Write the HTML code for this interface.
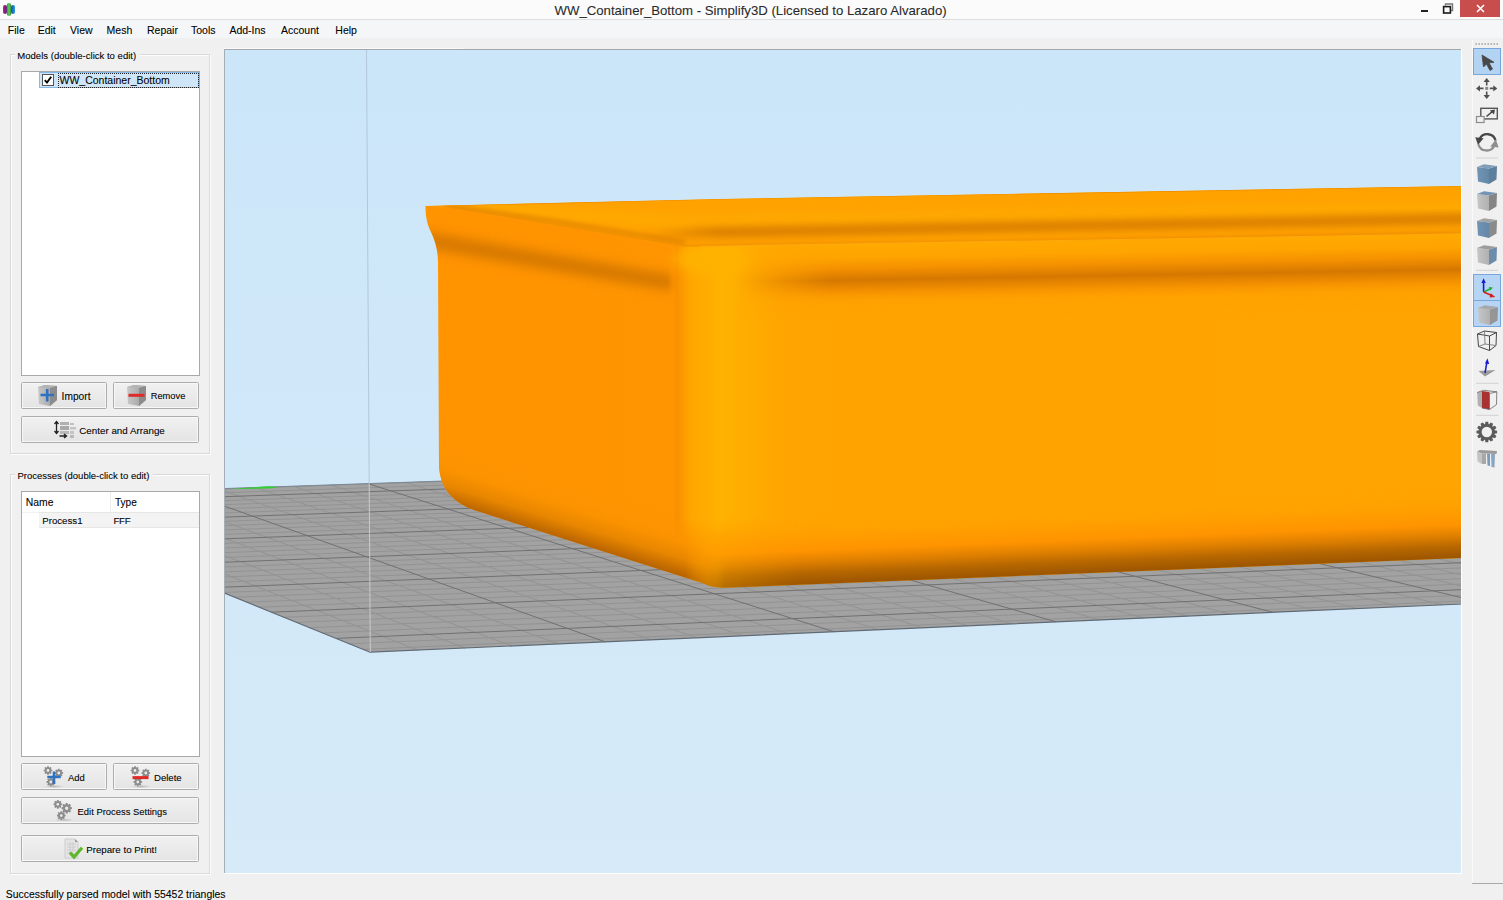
<!DOCTYPE html>
<html><head><meta charset="utf-8">
<style>
*{margin:0;padding:0;box-sizing:border-box}
html,body{width:1503px;height:900px;overflow:hidden;background:#f0f0f0;font-family:"Liberation Sans",sans-serif;color:#000}
.a{position:absolute}
#title{left:0;top:0;width:1503px;height:19px;background:#fbfbfb}
#title-line{left:0;top:19px;width:1503px;height:1px;background:#dddddd}
#menubar{left:0;top:20px;width:1503px;height:18px;background:#f5f6f8}
.menu{font-size:10.5px;top:24.8px;color:#1a1a1a}
.tx{line-height:1;white-space:nowrap;color:#000;-webkit-text-stroke:0.2px rgba(0,0,0,0.45)}
.t11{font-size:11px;color:#1e1e1e;white-space:nowrap}
.gb{border:1px solid #d9d9d9;box-shadow:inset 1px 1px 0 #fdfdfd, 1px 1px 0 #fdfdfd}
.lb{background:#fff;border:1px solid #a9a9a9}
.btn{border:1px solid #adadad;background:linear-gradient(#f2f2f2,#ebebeb 50%,#dddddd 51%,#cfcfcf);}
.btn{border-radius:1.5px;box-shadow:inset 0 0 0 1px #f7f7f7;background:linear-gradient(#f1f1f1,#e4e4e4)}
</style></head><body>
<div id="title" class="a"></div>
<div id="title-line" class="a"></div>
<!-- app icon -->
<svg class="a" style="left:0;top:0" width="20" height="19" viewBox="0 0 20 19">
 <defs>
  <linearGradient id="ip" x1="0" x2="1"><stop offset="0" stop-color="#c0207a"/><stop offset="1" stop-color="#5a1a90"/></linearGradient>
  <linearGradient id="ig" x1="0" x2="1"><stop offset="0" stop-color="#2a9a3a"/><stop offset="0.5" stop-color="#6acb5a"/><stop offset="1" stop-color="#2a8a3a"/></linearGradient>
  <linearGradient id="ib" x1="0" x2="1"><stop offset="0" stop-color="#1a4aa0"/><stop offset="1" stop-color="#2aa0e0"/></linearGradient>
 </defs>
 <rect x="3" y="5" width="4" height="9" rx="2" fill="url(#ip)"/>
 <rect x="11" y="5" width="4" height="9" rx="2" fill="url(#ib)"/>
 <rect x="6.8" y="3" width="4.4" height="13" rx="2.2" fill="url(#ig)"/>
</svg>
<div class="a tx" style="left:554.5px;top:3.8px;font-size:13.2px;color:#2e2e2e">WW_Container_Bottom - Simplify3D (Licensed to Lazaro Alvarado)</div>
<!-- window controls -->
<div class="a" style="left:1421px;top:10px;width:7px;height:2px;background:#222"></div>
<svg class="a" style="left:1442px;top:3px" width="12" height="11" viewBox="0 0 12 11"><path d="M3.5 2.5 V1 H10.5 V7.5 H9" fill="none" stroke="#777" stroke-width="1.4"/><rect x="1.6" y="3.6" width="6.8" height="6.4" fill="none" stroke="#1a1a1a" stroke-width="1.6"/></svg>
<div class="a" style="left:1460px;top:0;width:40px;height:17px;background:#c84d4d"></div>
<svg class="a" style="left:1476px;top:4px" width="9" height="9"><path d="M1 1L8 8M8 1L1 8" stroke="#fff" stroke-width="1.6"/></svg>

<div id="menubar" class="a"></div>
<div class="a tx menu" style="left:7.8px">File</div>
<div class="a tx menu" style="left:37.7px">Edit</div>
<div class="a tx menu" style="left:70px">View</div>
<div class="a tx menu" style="left:106.6px">Mesh</div>
<div class="a tx menu" style="left:147px">Repair</div>
<div class="a tx menu" style="left:191px">Tools</div>
<div class="a tx menu" style="left:229.4px">Add-Ins</div>
<div class="a tx menu" style="left:281px">Account</div>
<div class="a tx menu" style="left:335.3px">Help</div>

<!-- left panel: Models group -->
<div class="a gb" style="left:10px;top:54px;width:200px;height:400px"></div>
<div class="a" style="left:15px;top:50px;width:125px;height:8px;background:#f0f0f0"></div>
<div class="a tx" style="left:17.3px;top:51.3px;font-size:9.56px">Models (double-click to edit)</div>
<div class="a lb" style="left:21px;top:71px;width:179px;height:305px"></div>
<div class="a" style="left:39px;top:72px;width:160px;height:16px;background:#cfe6f8;border:1px solid #84b9ea"></div>
<div class="a" style="left:57.5px;top:72.5px;width:141px;height:15px;border:1px dotted #222"></div>
<div class="a" style="left:42px;top:74px;width:12px;height:12px;background:#fff;border:1px solid #555"></div>
<svg class="a" style="left:42px;top:74px" width="12" height="12"><path d="M2.8 6.2 L5 8.6 L9.2 2.8" stroke="#000" stroke-width="1.9" fill="none"/></svg>
<div class="a tx" style="left:59.5px;top:74.8px;font-size:10.5px">WW_Container_Bottom</div>

<!-- Import / Remove / Center -->
<div class="a btn" style="left:21px;top:382px;width:86px;height:27px"></div>
<div class="a btn" style="left:113px;top:382px;width:86px;height:27px"></div>
<div class="a btn" style="left:21px;top:416px;width:178px;height:27px"></div>
<svg class="a" style="left:37px;top:384px" width="22" height="23" viewBox="0 0 22 23">
 <defs><linearGradient id="cubeL" x1="0" x2="1"><stop offset="0" stop-color="#c8c8c8"/><stop offset="1" stop-color="#9a9a9a"/></linearGradient></defs>
 <path d="M1 3 L8 1 L20 2 L20 16 L13 22 L2 20 Z" fill="url(#cubeL)"/>
 <path d="M1 3 L8 1 L20 2 L13 4 Z" fill="#b4b4b4"/>
 <path d="M13 4 L20 2 L20 16 L13 22 Z" fill="#8c8c8c"/>
 <path d="M10.2 5 V17.5 M3.5 11 H17" stroke="#2f73c0" stroke-width="2.6"/>
</svg>
<div class="a tx" style="left:61.6px;top:391.9px;font-size:10.2px">Import</div>
<svg class="a" style="left:126px;top:384px" width="22" height="23" viewBox="0 0 22 23">
 <path d="M1 3 L8 1 L20 2 L20 16 L13 22 L2 20 Z" fill="url(#cubeL)"/>
 <path d="M1 3 L8 1 L20 2 L13 4 Z" fill="#b4b4b4"/>
 <path d="M13 4 L20 2 L20 16 L13 22 Z" fill="#8c8c8c"/>
 <path d="M2.5 11.3 H18.5" stroke="#e02a2a" stroke-width="3"/>
</svg>
<div class="a tx" style="left:150.7px;top:392.4px;font-size:9.3px">Remove</div>
<svg class="a" style="left:54px;top:420px" width="24" height="20" viewBox="0 0 24 20">
 <path d="M2.5 2 V13 M0.5 4 L2.5 1.5 L4.5 4 M0.5 11 L2.5 13.5 L4.5 11" stroke="#222" stroke-width="1.3" fill="none"/>
 <rect x="6" y="2" width="9" height="3" fill="#b0b0b0"/>
 <rect x="16" y="3" width="4" height="2" fill="#c0c0c0"/>
 <rect x="6" y="6" width="9" height="4" fill="#a8a8a8"/>
 <rect x="16" y="7" width="6" height="2.5" fill="#c4c4c4"/>
 <rect x="6" y="11" width="9" height="3" fill="#b8b8b8"/>
 <rect x="16" y="11" width="4" height="3" fill="#c4c4c4"/>
 <rect x="16" y="15" width="4" height="3" fill="#b8b8b8"/>
 <path d="M5.5 16 H12 M10 14 L12.5 16 L10 18" stroke="#222" stroke-width="1.4" fill="none"/>
</svg>
<div class="a tx" style="left:79.3px;top:426.2px;font-size:9.8px">Center and Arrange</div>

<!-- Processes group -->
<div class="a gb" style="left:10px;top:474px;width:200px;height:400px"></div>
<div class="a" style="left:15px;top:469px;width:138px;height:8px;background:#f0f0f0"></div>
<div class="a tx" style="left:17.4px;top:471px;font-size:9.5px">Processes (double-click to edit)</div>
<div class="a lb" style="left:21px;top:491px;width:179px;height:266px"></div>
<div class="a" style="left:110px;top:492px;width:1px;height:20px;background:#ededed"></div>
<div class="a" style="left:22px;top:512px;width:177px;height:1px;background:#f2f2f2"></div>
<div class="a tx" style="left:25.7px;top:498.2px;font-size:10.4px">Name</div>
<div class="a tx" style="left:114.9px;top:498.2px;font-size:10.15px">Type</div>
<div class="a" style="left:39px;top:512px;width:160px;height:16px;background:#f3f3f3;border-top:1px solid #e6e6e6;border-bottom:1px solid #e6e6e6"></div>
<div class="a tx" style="left:42.2px;top:516px;font-size:9.7px">Process1</div>
<div class="a tx" style="left:113.6px;top:516px;font-size:9.7px;letter-spacing:-0.4px">FFF</div>

<!-- Add / Delete / Edit / Prepare -->
<div class="a btn" style="left:21px;top:763px;width:86px;height:27px"></div>
<div class="a btn" style="left:113px;top:763px;width:86px;height:27px"></div>
<div class="a btn" style="left:21px;top:797px;width:178px;height:27px"></div>
<div class="a btn" style="left:21px;top:835px;width:178px;height:27px"></div>
<svg class="a" style="left:43px;top:765px" width="22" height="24" viewBox="0 0 22 24">
 <defs>
  <g id="gear"><path d="M3.02 -1.05 L4.33 -0.77 L4.33 0.77 L3.02 1.05 L2.88 1.40 L3.61 2.52 L2.52 3.61 L1.40 2.88 L1.05 3.02 L0.77 4.33 L-0.77 4.33 L-1.05 3.02 L-1.40 2.88 L-2.52 3.61 L-3.61 2.52 L-2.88 1.40 L-3.02 1.05 L-4.33 0.77 L-4.33 -0.77 L-3.02 -1.05 L-2.88 -1.40 L-3.61 -2.52 L-2.52 -3.61 L-1.40 -2.88 L-1.05 -3.02 L-0.77 -4.33 L0.77 -4.33 L1.05 -3.02 L1.40 -2.88 L2.52 -3.61 L3.61 -2.52 L2.88 -1.40 Z M1.40 0 A1.40 1.40 0 1 0 -1.40 0 A1.40 1.40 0 1 0 1.40 0 Z" fill="#8c8c8c" fill-rule="evenodd"/></g>
  <radialGradient id="shd"><stop offset="0" stop-color="#999" stop-opacity="0.6"/><stop offset="1" stop-color="#999" stop-opacity="0"/></radialGradient>
 </defs>
 <ellipse cx="11" cy="21.5" rx="10" ry="1.6" fill="url(#shd)"/>
 <use href="#gear" x="5" y="5.5"/>
 <use href="#gear" x="15.8" y="8"/>
 <use href="#gear" x="7.8" y="17"/>
 <path d="M11 6.5 V19 M4.3 12 H17.8" stroke="#2f73c0" stroke-width="2.6"/>
</svg>
<div class="a tx" style="left:68px;top:772.8px;font-size:9.44px">Add</div>
<svg class="a" style="left:130px;top:765px" width="22" height="24" viewBox="0 0 22 24">
 <ellipse cx="11" cy="21.5" rx="10" ry="1.6" fill="url(#shd)"/>
 <use href="#gear" x="5" y="5.5"/>
 <use href="#gear" x="15.8" y="8"/>
 <use href="#gear" x="7.8" y="17"/>
 <path d="M2.5 12.6 H18.5" stroke="#e02a2a" stroke-width="3"/>
</svg>
<div class="a tx" style="left:154px;top:772.8px;font-size:9.58px">Delete</div>
<svg class="a" style="left:52px;top:799px" width="24" height="24" viewBox="0 0 24 24">
 <ellipse cx="12" cy="21" rx="10" ry="1.6" fill="url(#shd)"/>
 <use href="#gear" x="5.8" y="5.3"/>
 <use href="#gear" x="14.7" y="9.2" transform="translate(14.7,9.2) scale(1.2) translate(-14.7,-9.2)"/>
 <use href="#gear" x="9.3" y="16.6"/>
</svg>
<div class="a tx" style="left:77.6px;top:806.8px;font-size:9.42px">Edit Process Settings</div>
<svg class="a" style="left:63px;top:838px" width="22" height="22" viewBox="0 0 22 22">
 <path d="M2 1 H12 L15 4 V20 H2 Z" fill="#e4e4e4" stroke="#c8c8c8" stroke-width="0.8"/>
 <path d="M12 1 L15 4 H12 Z" fill="#999"/>
 <path d="M4 6H13M4 9H13M4 12H13M4 15H10M7 4V18M10 4V18" stroke="#c9c9c9" stroke-width="0.8"/>
 <path d="M7 14.5 L11 19 L19 9.8" stroke="#5cb82a" stroke-width="3.2" fill="none"/>
</svg>
<div class="a tx" style="left:86.2px;top:845px;font-size:9.72px">Prepare to Print!</div>

<!-- status bar -->
<div class="a tx" style="left:5.7px;top:890.2px;font-size:10.44px">Successfully parsed model with 55452 triangles</div>

<!-- viewport -->
<div class="a" style="left:223px;top:48px;width:240px;height:1px;background:#fafafa"></div>
<div class="a" id="vp" style="left:224px;top:49px;width:1238px;height:825px;overflow:hidden;background:linear-gradient(#cbe6f9,#d6eaf8)">
<svg class="a" style="left:-224px;top:-49px" width="1503" height="900" viewBox="0 0 1503 900">
<defs>
 <filter id="b2" x="-50%" y="-50%" width="200%" height="200%"><feGaussianBlur stdDeviation="2"/></filter>
 <filter id="b4" x="-50%" y="-50%" width="200%" height="200%"><feGaussianBlur stdDeviation="4"/></filter>
 <filter id="b8" x="-50%" y="-50%" width="200%" height="200%"><feGaussianBlur stdDeviation="8"/></filter>
 <clipPath id="cc"><path id="outline" d="M426 206 L720 199 L1461 186 L1470 185.8 L1470 557.6 L1461 558 L725 587.7 C715 588 710 586.5 703 583.3 L474 510 C452 502 440 488 439 465 L438 262 C438 250 435 240 431 232 C427 224 425.5 216 425.5 206 Z"/></clipPath>
 <filter id="b1" x="-50%" y="-50%" width="200%" height="200%"><feGaussianBlur stdDeviation="1"/></filter>
 <filter id="b6" x="-50%" y="-50%" width="200%" height="200%"><feGaussianBlur stdDeviation="6"/></filter>
 <linearGradient id="gRT" gradientUnits="userSpaceOnUse" x1="0" y1="46.6" x2="0" y2="136.6">
  <stop offset="0" stop-color="#ffaa00" stop-opacity="1"/>
  <stop offset="0.15" stop-color="#ffa400" stop-opacity="1"/>
  <stop offset="0.27" stop-color="#f59200" stop-opacity="1"/>
  <stop offset="0.405" stop-color="#d67800" stop-opacity="1"/>
  <stop offset="0.54" stop-color="#f59200" stop-opacity="1"/>
  <stop offset="0.65" stop-color="#ffa000" stop-opacity="0.6"/>
  <stop offset="0.85" stop-color="#ffa300" stop-opacity="0"/>
 </linearGradient>
 <linearGradient id="gRB" gradientUnits="userSpaceOnUse" x1="0" y1="-70" x2="0" y2="5">
  <stop offset="0" stop-color="#ffa400" stop-opacity="0"/>
  <stop offset="0.25" stop-color="#ffa000" stop-opacity="1"/>
  <stop offset="0.48" stop-color="#ff9400"/>
  <stop offset="0.63" stop-color="#e08000"/>
  <stop offset="0.77" stop-color="#b86800"/>
  <stop offset="0.9" stop-color="#a05800"/>
  <stop offset="1" stop-color="#985400"/>
 </linearGradient>
 <linearGradient id="gLB" gradientUnits="userSpaceOnUse" x1="0" y1="-60" x2="0" y2="10">
  <stop offset="0" stop-color="#ff9400" stop-opacity="0"/>
  <stop offset="0.4" stop-color="#fa9200" stop-opacity="1"/>
  <stop offset="0.62" stop-color="#e88600"/>
  <stop offset="0.76" stop-color="#cc7200"/>
  <stop offset="0.86" stop-color="#b86400"/>
  <stop offset="1" stop-color="#b06000"/>
 </linearGradient>
 <linearGradient id="mgR" gradientUnits="userSpaceOnUse" x1="685" y1="0" x2="725" y2="0">
  <stop offset="0" stop-color="#000"/><stop offset="1" stop-color="#fff"/>
 </linearGradient>
 <linearGradient id="mgL" gradientUnits="userSpaceOnUse" x1="685" y1="0" x2="725" y2="0">
  <stop offset="0" stop-color="#fff"/><stop offset="1" stop-color="#000"/>
 </linearGradient>
 <mask id="mR" maskUnits="userSpaceOnUse" x="0" y="0" width="1503" height="900"><rect x="0" y="0" width="1503" height="900" fill="url(#mgR)"/></mask>
 <mask id="mL" maskUnits="userSpaceOnUse" x="0" y="0" width="1503" height="900"><rect x="0" y="0" width="1503" height="900" fill="url(#mgL)"/></mask>
 <clipPath id="ci"><path d="M426 206 L720 199 L1461 186 L1500 185 L1500 233.5 L685 246.8 L445 207 Z"/></clipPath>
 <linearGradient id="mgL2" gradientUnits="userSpaceOnUse" x1="668" y1="0" x2="678" y2="0">
  <stop offset="0" stop-color="#fff"/><stop offset="1" stop-color="#000"/>
 </linearGradient>
 <mask id="mL2" maskUnits="userSpaceOnUse" x="0" y="0" width="1503" height="900"><rect x="0" y="0" width="1503" height="900" fill="url(#mgL2)"/></mask>
 <linearGradient id="mgRB" gradientUnits="userSpaceOnUse" x1="690" y1="0" x2="800" y2="0">
  <stop offset="0" stop-color="#a0a0a0"/><stop offset="1" stop-color="#fff"/>
 </linearGradient>
 <mask id="mRB" maskUnits="userSpaceOnUse" x="0" y="-1000" width="1503" height="2000"><rect x="0" y="-1000" width="1503" height="2000" fill="url(#mgRB)"/></mask>
 <linearGradient id="mgRT" gradientUnits="userSpaceOnUse" x1="735" y1="0" x2="830" y2="0">
  <stop offset="0" stop-color="#000"/><stop offset="1" stop-color="#fff"/>
 </linearGradient>
 <mask id="mRT" maskUnits="userSpaceOnUse" x="0" y="0" width="1503" height="900"><rect x="0" y="0" width="1503" height="900" fill="url(#mgRT)"/></mask>
 <linearGradient id="mgB1" gradientUnits="userSpaceOnUse" x1="640" y1="0" x2="720" y2="0">
  <stop offset="0" stop-color="#000"/><stop offset="1" stop-color="#fff"/>
 </linearGradient>
 <mask id="mB1" maskUnits="userSpaceOnUse" x="0" y="0" width="1503" height="900"><rect x="0" y="0" width="1503" height="900" fill="url(#mgB1)"/></mask>
 <linearGradient id="gx" gradientUnits="userSpaceOnUse" x1="426" y1="0" x2="1461" y2="0">
  <stop offset="0.0000" stop-color="#ff9300"/>
  <stop offset="0.2386" stop-color="#ff9500"/>
  <stop offset="0.2425" stop-color="#f99000"/>
  <stop offset="0.2551" stop-color="#ffa600"/>
  <stop offset="0.2841" stop-color="#ffb200"/>
  <stop offset="0.3082" stop-color="#ffad00"/>
  <stop offset="0.3469" stop-color="#ffa500"/>
  <stop offset="0.4097" stop-color="#ffa300"/>
  <stop offset="1.0000" stop-color="#ffa400"/>
 </linearGradient>
</defs>
<polygon points="370.0,652.2 1889.6,585.1 1251.3,453.3 -13.1,496.7" fill="#a2a2a2"/>
<path d="M363.0 649.4L1878.1 582.7 M349.3 643.8L1855.8 578.1 M322.6 633.0L1811.9 569.0 M309.5 627.7L1790.4 564.6 M296.6 622.4L1769.1 560.2 M283.9 617.3L1748.2 555.9 M259.0 607.2L1707.0 547.4 M246.8 602.2L1686.8 543.2 M234.8 597.3L1666.9 539.1 M222.9 592.5L1647.2 535.0 M199.6 583.0L1608.5 527.0 M188.2 578.4L1589.5 523.1 M176.9 573.8L1570.8 519.2 M165.8 569.3L1552.2 515.4 M144.0 560.5L1515.8 507.9 M133.3 556.1L1497.9 504.2 M122.7 551.8L1480.3 500.6 M112.3 547.6L1462.8 497.0 M91.8 539.3L1428.4 489.9 M81.8 535.2L1411.6 486.4 M71.8 531.2L1394.9 482.9 M62.0 527.2L1378.4 479.5 M42.8 519.4L1345.9 472.8 M33.3 515.5L1329.9 469.5 M24.0 511.7L1314.2 466.3 M14.8 508.0L1298.6 463.0 M-3.4 500.6L1267.8 456.7 M-12.3 497.0L1252.7 453.6 M417.5 650.1L25.7 495.3 M464.8 648.0L64.4 494.0 M511.8 646.0L103.0 492.7 M558.5 643.9L141.3 491.4 M651.2 639.8L217.5 488.8 M697.2 637.8L255.3 487.5 M743.0 635.7L293.0 486.2 M788.4 633.7L330.5 484.9 M878.6 629.7L405.1 482.3 M923.4 627.8L442.1 481.1 M967.9 625.8L479.0 479.8 M1012.1 623.8L515.7 478.5 M1100.0 620.0L588.6 476.0 M1143.5 618.0L624.8 474.8 M1186.8 616.1L660.9 473.5 M1229.9 614.2L696.8 472.3 M1315.4 610.4L768.2 469.9 M1357.8 608.6L803.7 468.6 M1400.0 606.7L839.0 467.4 M1442.0 604.8L874.2 466.2 M1525.3 601.2L944.0 463.8 M1566.6 599.3L978.8 462.6 M1607.7 597.5L1013.3 461.5 M1648.6 595.7L1047.8 460.3 M1729.7 592.1L1116.2 457.9 M1770.0 590.4L1150.2 456.8 M1810.1 588.6L1184.0 455.6 M1849.9 586.8L1217.8 454.4" stroke="#939393" stroke-width="1" fill="none"/>
<path d="M335.9 638.4L1833.7 573.5 M271.4 612.2L1727.5 551.6 M211.2 587.7L1627.7 531.0 M154.8 564.9L1533.9 511.6 M102.0 543.4L1445.5 493.4 M52.4 523.3L1362.0 476.2 M5.6 504.3L1283.1 459.9 M605.0 641.8L179.5 490.1 M833.7 631.7L367.9 483.6 M1056.2 621.9L552.2 477.3 M1272.8 612.3L732.6 471.1 M1483.7 603.0L909.2 465.0 M1689.3 593.9L1082.0 459.1" stroke="#717171" stroke-width="1" fill="none"/>
<path d="M-13.1 496.7L370.0 652.2L1889.6 585.1L1251.3 453.3" stroke="#606a74" stroke-width="1.2" fill="none"/>
<path d="M-13.1 496.7L1251.3 453.3" stroke="#7c8894" stroke-width="1" fill="none"/>

<line x1="366.5" y1="49" x2="369.2" y2="483" stroke="#b3c7d7" stroke-width="1"/>
<line x1="369.2" y1="483" x2="370.3" y2="652" stroke="#c8cacc" stroke-width="1"/>
<path d="M229 489 L268 486.3 L279 487.2 L268 488.5 Z" fill="#2fd12f"/>
<g clip-path="url(#cc)">
 <rect x="400" y="150" width="1100" height="460" fill="url(#gx)"/>
 <!-- right face below rim (skewed gradient) -->
 <g mask="url(#mRT)">
 <g transform="matrix(1,-0.0175,0,1,0,211.9)">
  <rect x="600" y="46.6" width="900" height="90" fill="url(#gRT)"/>
 </g>
 </g>
 <!-- corner lip highlight -->
 <ellipse cx="712" cy="259" rx="38" ry="15" fill="#ffb200" filter="url(#b6)" opacity="0.9"/>
 <!-- left face features -->
 <g mask="url(#mL2)">
  <path d="M420 239 L572 266 L674 283" stroke="#c87000" stroke-width="15" fill="none" filter="url(#b6)" opacity="0.8"/>
 </g>
 <!-- bottom shading -->
 <g mask="url(#mR)">
 <g transform="matrix(1,-0.040,0,1,0,616.7)">
  <rect x="600" y="-70" width="900" height="75" fill="url(#gRB)" mask="url(#mRB)"/>
 </g>
 </g>
 <g mask="url(#mL)">
  <g transform="matrix(1,0.31,0,1,0,363.8)">
   <rect x="380" y="-60" width="360" height="70" fill="url(#gLB)"/>
  </g>
 </g>
 <!-- inner wall above rim line -->
 <g clip-path="url(#ci)">
  <rect x="400" y="150" width="1100" height="120" fill="#ffa200"/>
  <path d="M400 197 L560 214 L680 222 L1500 207" stroke="#ffaa00" stroke-width="10" fill="none" filter="url(#b4)"/>
  <path d="M445 205.5 L560 222 L685 242.5" stroke="#d87c00" stroke-width="4" fill="none" filter="url(#b2)" opacity="0.7"/>
  <path d="M640 236 L700 232.5 L760 231.5 L1500 218" stroke="#d07400" stroke-width="8" fill="none" filter="url(#b4)" mask="url(#mB1)"/>
  <path d="M445 208.5 L685 248.5 L1500 234" stroke="#ec8800" stroke-width="5" fill="none" filter="url(#b2)"/>
  <path d="M426 206 L720 199 L1461 186" stroke="#ee8c00" stroke-width="1.2" fill="none"/>
 </g>
 <path d="M700 246.5 L1500 233.2" stroke="#ffae10" stroke-width="1.2" fill="none" opacity="0.8"/>
</g>
</svg>
</div>
<div class="a" style="left:224px;top:49px;width:1238px;height:1px;background:#a3a6aa"></div>
<div class="a" style="left:224px;top:49px;width:1px;height:824px;background:#a5adb5"></div>
<div class="a" style="left:1461px;top:49px;width:1px;height:825px;background:#ffffff"></div>
<div class="a" style="left:224px;top:873px;width:1238px;height:1px;background:#ffffff"></div>

<!-- right toolbar -->
<div class="a" style="left:1472px;top:40px;width:31px;height:844px;background:#f0f0f0;border-left:1px solid #fafafa"></div>
<div class="a" style="left:1472px;top:883px;width:31px;height:1px;background:#a8a8a8"></div>
<svg class="a" style="left:1472px;top:38px" width="31" height="440" viewBox="1472 38 31 440">
 <defs>
  <linearGradient id="cbF" x1="0" x2="1"><stop offset="0" stop-color="#c6c6c6"/><stop offset="1" stop-color="#b0b0b0"/></linearGradient>
  <linearGradient id="cbB" x1="0" x2="1"><stop offset="0" stop-color="#7294b4"/><stop offset="1" stop-color="#6487a8"/></linearGradient>
 </defs>
 <path d="M1475.5 44 H1499" stroke="#9a9a9a" stroke-width="1.4" stroke-dasharray="1.4 1.6"/>
 <rect x="1473.5" y="48.5" width="27" height="26" fill="#b3d3f3" stroke="#76a6dc"/>
 <path d="M1482 55 L1483.5 67 L1486.5 64 L1490 70.5 L1492.5 69 L1489 62.8 L1494 62.3 Z" fill="#484848" stroke="#484848" stroke-width="0.8" stroke-linejoin="round"/>
 <!-- move -->
 <g fill="#505050" stroke="none">
  <path d="M1486.7 78 L1483.5 82 L1489.9 82 Z"/><path d="M1486.7 99 L1483.5 95 L1489.9 95 Z"/>
  <path d="M1476 88.4 L1480 85.2 L1480 91.6 Z"/><path d="M1497.3 88.4 L1493.3 85.2 L1493.3 91.6 Z"/>
 </g>
 <path d="M1486.7 81 V85.5 M1486.7 91.5 V96 M1479 88.4 H1483.5 M1489.8 88.4 H1494.5" stroke="#505050" stroke-width="1.6"/>
 <rect x="1485.2" y="86.9" width="3" height="3" fill="#8a8a8a"/>
 <!-- scale -->
 <rect x="1480.8" y="108.3" width="16.5" height="10.6" fill="none" stroke="#555" stroke-width="1.4"/>
 <rect x="1476.5" y="116.5" width="7.6" height="6" fill="#f0f0f0" stroke="#8c8c8c" stroke-width="1.2"/>
 <path d="M1486.5 116.5 L1493 111" stroke="#444" stroke-width="1.6"/>
 <path d="M1495 109.5 L1489.8 110.4 L1494 114.6 Z" fill="#444"/>
 <!-- rotate -->
 <path d="M1495.6 140.5 A8.6 8.6 0 0 0 1479.6 139" fill="none" stroke="#474747" stroke-width="2.3"/>
 <path d="M1475.3 137.2 L1483.6 138.2 L1478 145 Z" fill="#474747"/>
 <path d="M1478.3 144.2 A8.6 8.6 0 0 0 1494.3 145.7" fill="none" stroke="#8e8e8e" stroke-width="2.3"/>
 <path d="M1498.6 147.4 L1490.3 146.4 L1495.9 139.6 Z" fill="#8e8e8e"/>
 <path d="M1476 158 H1498" stroke="#d2d2d2" stroke-width="1"/>
 <g transform="translate(1477,164)"><path d="M0 3 L12 4.5 L12 20 L1 17.5 Z" fill="url(#cbB)"/><path d="M12 4.5 L20 2 L19.5 15.5 L12 20 Z" fill="#5d7f9e"/><path d="M0 3 L7 0.3 L20 2 L12 4.5 Z" fill="#809dba"/></g><g transform="translate(1477,191)"><path d="M0 3 L12 4.5 L12 20 L1 17.5 Z" fill="url(#cbF)"/><path d="M12 4.5 L20 2 L19.5 15.5 L12 20 Z" fill="#858585"/><path d="M0 3 L7 0.3 L20 2 L12 4.5 Z" fill="#7394b3"/></g><g transform="translate(1477,218)"><path d="M0 3 L12 4.5 L12 20 L1 17.5 Z" fill="url(#cbB)"/><path d="M12 4.5 L20 2 L19.5 15.5 L12 20 Z" fill="#8a8a8a"/><path d="M0 3 L7 0.3 L20 2 L12 4.5 Z" fill="#a4a4a4"/></g><g transform="translate(1477,245)"><path d="M0 3 L12 4.5 L12 20 L1 17.5 Z" fill="url(#cbF)"/><path d="M12 4.5 L20 2 L19.5 15.5 L12 20 Z" fill="#6b8cab"/><path d="M0 3 L7 0.3 L20 2 L12 4.5 Z" fill="#9c9c9c"/></g>
 <path d="M1476 270.3 H1498" stroke="#d2d2d2" stroke-width="1"/>
 <rect x="1473.5" y="274.5" width="27" height="52" fill="#b6d5f4" stroke="#78a7dc"/>
 <path d="M1473.5 300.5 H1500.5" stroke="#78a7dc"/>
 <!-- axes -->
 <path d="M1483.6 292 V281" stroke="#1a1ad0" stroke-width="1.6"/><path d="M1483.6 278.3 L1481.4 283 L1485.8 283 Z" fill="#1a1ad0"/>
 <path d="M1483.6 292 L1490.5 288.8" stroke="#20b030" stroke-width="1.5"/><path d="M1493 287.5 L1488.8 287 L1490.2 290.6 Z" fill="#20b030"/>
 <path d="M1483.6 292 L1492.3 295.8" stroke="#d02020" stroke-width="1.6"/><path d="M1495.3 297 L1490.6 293.2 L1489.6 297.6 Z" fill="#d02020"/>
 <g transform="translate(1478,305)"><path d="M0 3 L12 4.5 L12 20 L1 17.5 Z" fill="url(#cbF)"/><path d="M12 4.5 L20 2 L19.5 15.5 L12 20 Z" fill="#959595"/><path d="M0 3 L7 0.3 L20 2 L12 4.5 Z" fill="#a8a8a8"/></g>
 <!-- wireframe cube -->
 <g fill="none" stroke="#333" stroke-width="0.9">
  <path d="M1477.5 334 L1484.5 331 L1496.5 332.5 L1489.5 336 Z"/>
  <path d="M1477.5 334 L1478.5 346.5 L1489.5 350.5 L1489.5 336 M1489.5 350.5 L1496 345.5 L1496.5 332.5"/>
  <path d="M1484.5 331 L1485 344 L1478.5 346.5 M1485 344 L1496 345.5" stroke="#777"/>
 </g>
 <!-- normal -->
 <path d="M1478.5 371 L1495.5 370 L1485 376.5 Z" fill="#9a9a9a"/>
 <path d="M1485 373 L1487 361.5" stroke="#1a1ad0" stroke-width="1.5"/><path d="M1487.4 358.3 L1485 363.5 L1489.2 364 Z" fill="#1a1ad0"/>
 <path d="M1476 383.3 H1498.5" stroke="#d2d2d2" stroke-width="1"/>
 <!-- cross-section -->
 <path d="M1477.2 392.5 L1482 391 L1482 408 L1477.8 405.5 Z" fill="#b0b0b0"/>
 <path d="M1482 391 L1489.5 392 L1489.5 409.5 L1482 408 Z" fill="#a83232"/>
 <path d="M1477.2 392.5 L1483.5 390.3 L1496.8 391.8 L1489.5 393.5 M1489.5 393.5 L1489.5 409.5 L1496.5 404.5 L1496.8 391.8 M1482 408 L1489.5 409.5" fill="none" stroke="#666" stroke-width="0.8"/>
 <path d="M1476 415.3 H1498.5" stroke="#d2d2d2" stroke-width="1"/>
 <!-- gear -->
 <path transform="translate(1486.8,432)" d="M7.80 -1.77 L10.31 -1.36 L10.31 1.36 L7.80 1.77 L7.64 2.37 L9.61 3.98 L8.25 6.33 L5.87 5.43 L5.43 5.87 L6.33 8.25 L3.98 9.61 L2.37 7.64 L1.77 7.80 L1.36 10.31 L-1.36 10.31 L-1.77 7.80 L-2.37 7.64 L-3.98 9.61 L-6.33 8.25 L-5.43 5.87 L-5.87 5.43 L-8.25 6.33 L-9.61 3.98 L-7.64 2.37 L-7.80 1.77 L-10.31 1.36 L-10.31 -1.36 L-7.80 -1.77 L-7.64 -2.37 L-9.61 -3.98 L-8.25 -6.33 L-5.87 -5.43 L-5.43 -5.87 L-6.33 -8.25 L-3.98 -9.61 L-2.37 -7.64 L-1.77 -7.80 L-1.36 -10.31 L1.36 -10.31 L1.77 -7.80 L2.37 -7.64 L3.98 -9.61 L6.33 -8.25 L5.43 -5.87 L5.87 -5.43 L8.25 -6.33 L9.61 -3.98 L7.64 -2.37 Z M5.20 0 A5.20 5.20 0 1 0 -5.20 0 A5.20 5.20 0 1 0 5.20 0 Z" fill="#5a5a5a" fill-rule="evenodd"/>
 <!-- supports -->
 <path d="M1477 451.5 L1480 450 L1497 451 L1496.5 454 L1482 453.5 Z" fill="#9a9a9a"/>
 <path d="M1477 451.5 L1482 453.5 L1482 464 L1477.5 461.5 Z" fill="#c4c4c4"/>
 <path d="M1482 453.5 L1486 453.7 L1486 464 L1482 464 Z" fill="#a8a8a8"/>
 <path d="M1487 454 L1490 454 L1490 466 L1487.5 465.5 Z" fill="#7d9bb8"/>
 <path d="M1491 454 L1495 454 L1494.5 467.5 L1491.5 467 Z" fill="#8aa6c2"/>
</svg>
</body></html>
